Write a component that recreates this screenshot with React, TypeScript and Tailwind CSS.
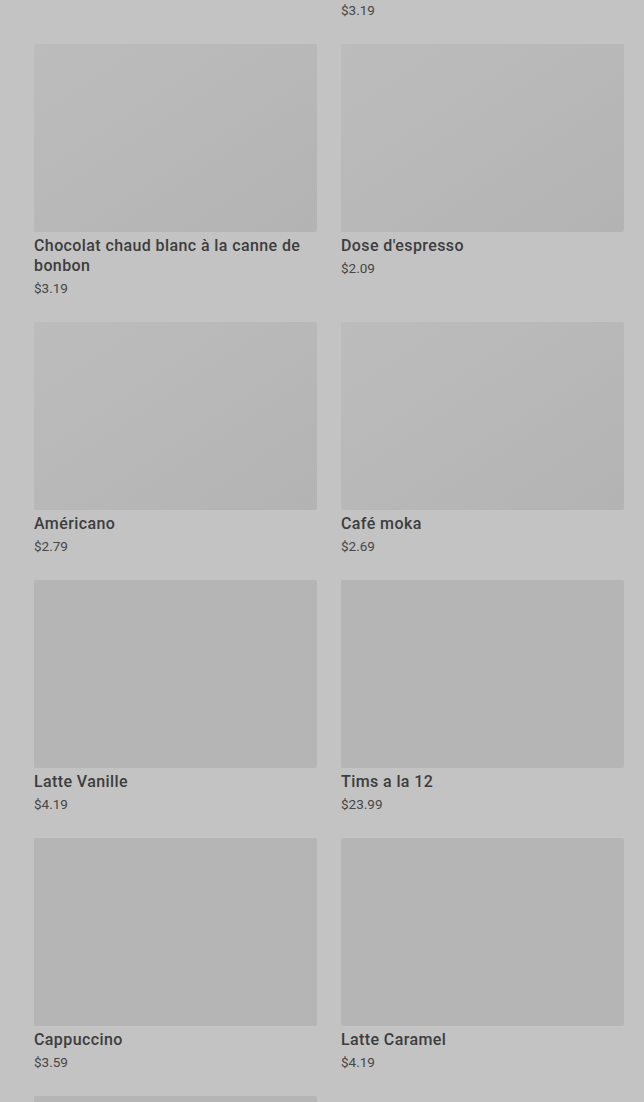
type Product = { name: string; price: string; shimmer?: boolean };

const rows: Product[][] = [
  [
    { name: "Chocolat chaud blanc à la canne de bonbon", price: "$3.19", shimmer: true },
    { name: "Dose d'espresso", price: "$2.09", shimmer: true },
  ],
  [
    { name: "Américano", price: "$2.79", shimmer: true },
    { name: "Café moka", price: "$2.69", shimmer: true },
  ],
  [
    { name: "Latte Vanille", price: "$4.19" },
    { name: "Tims a la 12", price: "$23.99" },
  ],
  [
    { name: "Cappuccino", price: "$3.59" },
    { name: "Latte Caramel", price: "$4.19" },
  ],
];

function ProductCard({ product }: { product: Product }) {
  return (
    <div className="flex flex-col">
      <div
        className={
          product.shimmer
            ? "h-[188px] w-full rounded-[2px] bg-gradient-to-br from-[#bcbcbc] via-[#b8b8b8] to-[#b3b3b3]"
            : "h-[188px] w-full rounded-[2px] bg-[#b5b5b5]"
        }
      />
      <div className="mt-1 text-[16px] font-medium leading-5 tracking-[0.4px] text-[#3d3d3d]">{product.name}</div>
      <div className="mt-[2px] text-[13.5px] leading-5 text-[#464646]">{product.price}</div>
    </div>
  );
}

export default function App() {
  return (
    <div
      className="h-[1102px] w-[644px] overflow-hidden bg-[#c3c3c3]"
      style={{ fontFamily: "Roboto, 'Noto Sans', sans-serif" }}
    >
      <div className="flex flex-col gap-6 pl-[34px] pr-[20px]">
        {/* tail of the card scrolled above the fold */}
        <div className="grid grid-cols-2 gap-x-6">
          <div />
          <div className="text-[13.5px] leading-5 text-[#464646]">$3.19</div>
        </div>
        {rows.map((row, i) => (
          <div key={i} className="grid grid-cols-2 items-start gap-x-6">
            {row.map((p, j) => (
              <ProductCard key={j} product={p} />
            ))}
          </div>
        ))}
        {/* next row, cut by the bottom edge */}
        <div className="grid grid-cols-2 gap-x-6">
          <div className="h-[188px] w-full rounded-[2px] bg-[#b5b5b5]" />
          <div />
        </div>
      </div>
    </div>
  );
}
